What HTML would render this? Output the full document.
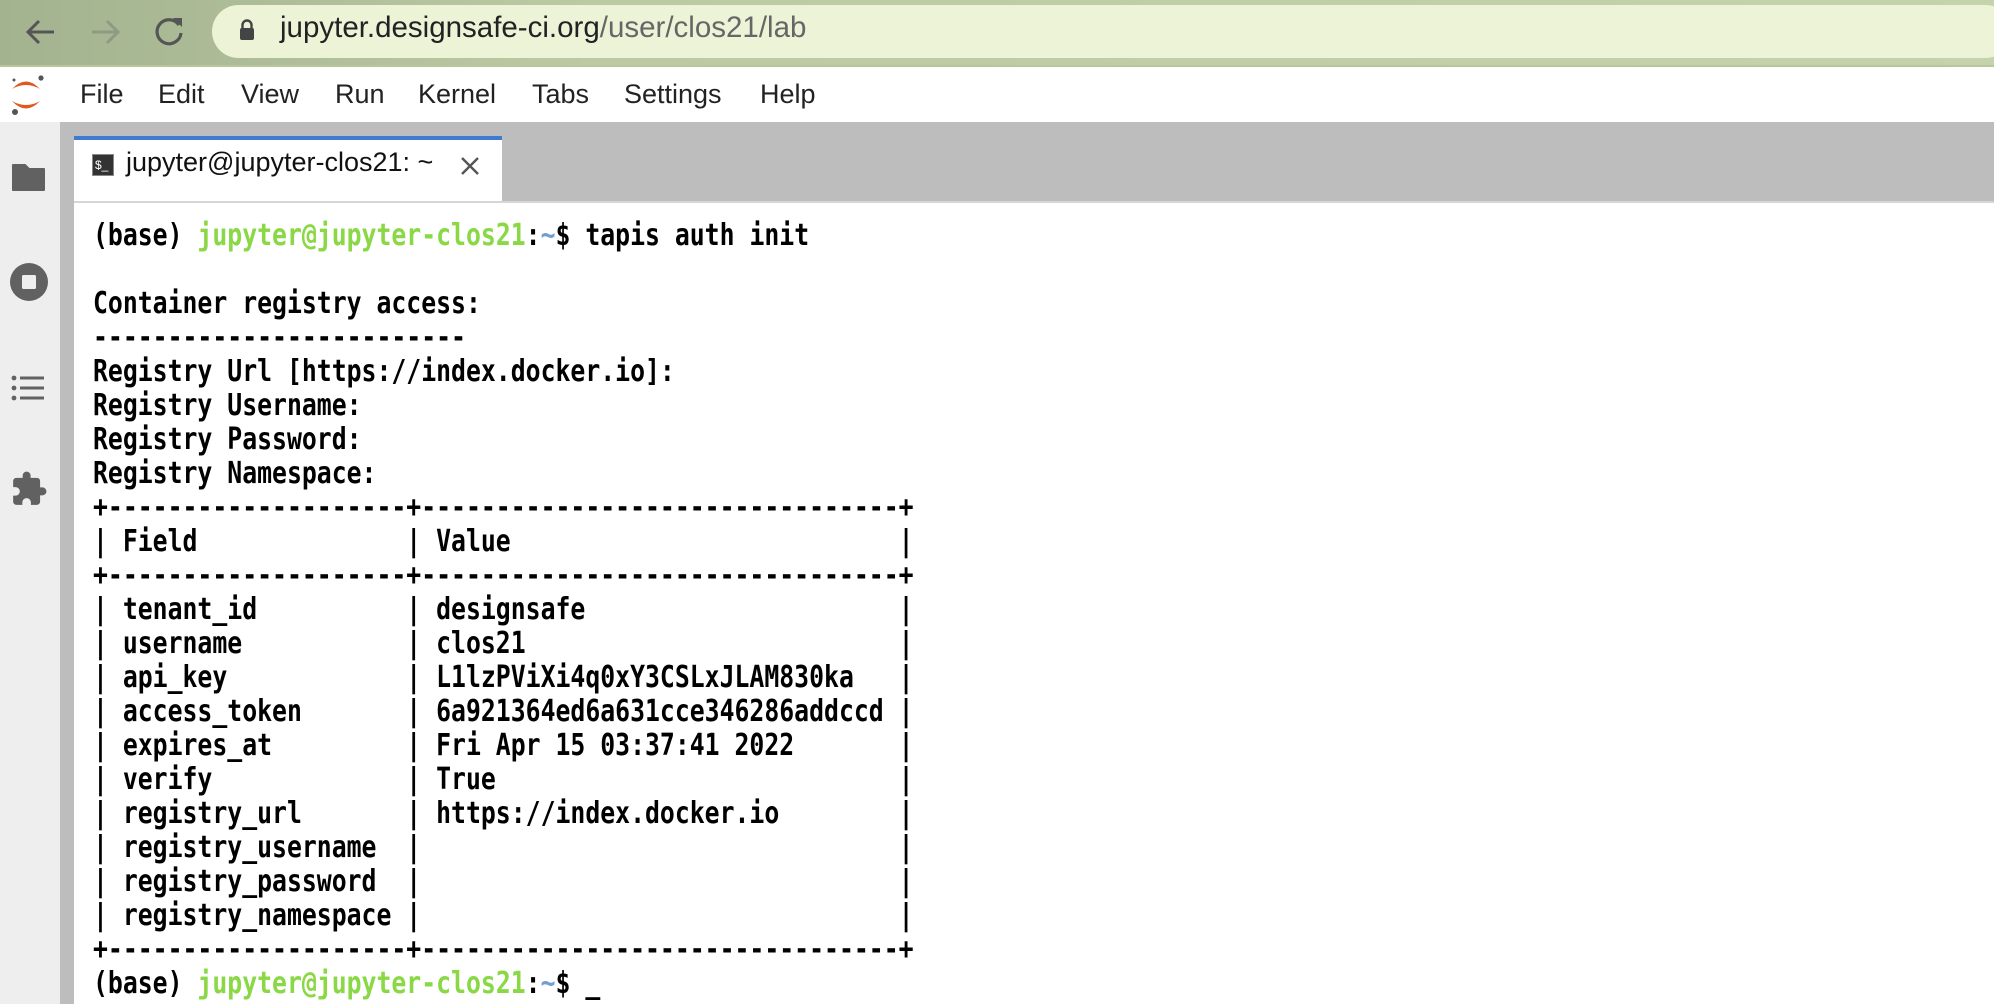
<!DOCTYPE html>
<html><head><meta charset="utf-8"><style>
*{margin:0;padding:0;box-sizing:border-box}
body{width:1994px;height:1004px;overflow:hidden;background:#fff;font-family:"Liberation Sans",sans-serif;position:relative}
#top{position:absolute;left:0;top:0;width:1994px;height:67px;background:linear-gradient(90deg,#a3b38f,#bccaa4 30%,#c5d3ad);border-bottom:2px solid #b6c79a}
#addr{position:absolute;left:212px;top:5px;width:1800px;height:53px;border-radius:27px;background:#ecf3d6}
#url{position:absolute;left:280px;top:11px;font-size:29.5px;color:#222}
#url span{color:#666}
#menu{position:absolute;left:0;top:67px;width:1994px;height:55px;background:#fff}
#menu .m{position:absolute;top:12px;font-size:27px;color:#222}
#side{position:absolute;left:0;top:122px;width:60px;height:882px;background:#eeeeee}
#gray{position:absolute;left:60px;top:122px;width:1934px;height:79px;background:#bdbdbd}
#gstrip{position:absolute;left:60px;top:122px;width:14px;height:882px;background:#bdbdbd}
#tab{position:absolute;left:74px;top:136px;width:428px;height:66px;background:#fff;border-top:4px solid #3f7bd0}
#term{position:absolute;left:74px;top:201px;width:1920px;height:803px;background:#fff;border-top:2px solid #d6d6d6}
pre{position:absolute;left:93px;top:219px;font-family:"DejaVu Sans Mono","Liberation Mono",monospace;font-weight:bold;font-size:30px;line-height:34px;color:#000;transform:scaleX(0.826);transform-origin:0 0}
.g{color:#8ad845}.b{color:#729fcf}
</style></head><body>
<div id="top">
<svg style="position:absolute;left:24px;top:16px" width="34" height="32" viewBox="0 0 34 32"><path d="M30 16H5M15 5L4 16l11 11" fill="none" stroke="#555" stroke-width="3"/></svg>
<svg style="position:absolute;left:88px;top:16px" width="34" height="32" viewBox="0 0 34 32"><path d="M4 16h25M19 5l11 11-11 11" fill="none" stroke="#8f9a82" stroke-width="3"/></svg>
<svg style="position:absolute;left:152px;top:14px" width="34" height="34" viewBox="0 0 34 34"><path d="M27 11A12 12 0 1 0 29 19" fill="none" stroke="#555" stroke-width="3.2"/><path d="M21 4h9v9z" fill="#555"/></svg>
<div id="addr"></div>
<svg style="position:absolute;left:239px;top:18px" width="16" height="24" viewBox="0 0 16 24"><path d="M3.5 11V7a4.5 4.5 0 0 1 9 0v4" fill="none" stroke="#444" stroke-width="2.4"/><rect x="1" y="10" width="14" height="12" rx="2" fill="#444"/></svg>
<div id="url">jupyter.designsafe-ci.org<span>/user/clos21/lab</span></div>
</div>
<div id="menu">
<svg style="position:absolute;left:6px;top:5px" width="40" height="46" viewBox="0 0 40 46"><path d="M6 17 Q20 2 34 17 Q20 9 6 17Z" fill="#e05a1f"/><path d="M6 29 Q20 44 34 29 Q20 37 6 29Z" fill="#e05a1f"/><circle cx="35" cy="6" r="2.6" fill="#555"/><circle cx="9" cy="40" r="3" fill="#555"/><circle cx="8" cy="8" r="1.5" fill="#555"/></svg>
<div class="m" style="left:80px">File</div><div class="m" style="left:158px">Edit</div><div class="m" style="left:241px">View</div><div class="m" style="left:335px">Run</div><div class="m" style="left:418px">Kernel</div><div class="m" style="left:532px">Tabs</div><div class="m" style="left:624px">Settings</div><div class="m" style="left:760px">Help</div>
</div>
<div id="side">
<svg style="position:absolute;left:11px;top:40px" width="36" height="30" viewBox="0 0 36 30"><path d="M2 3h12l4 4h15v21H2z" fill="#616161" stroke="#616161" stroke-width="2" stroke-linejoin="round"/></svg>
<svg style="position:absolute;left:9px;top:140px" width="40" height="40" viewBox="0 0 40 40"><circle cx="20" cy="20" r="19" fill="#616161"/><rect x="13" y="13" width="14" height="14" rx="1.5" fill="#eee"/></svg>
<svg style="position:absolute;left:11px;top:252px" width="34" height="28" viewBox="0 0 34 28"><g fill="#616161"><circle cx="3" cy="4" r="2.4"/><circle cx="3" cy="14" r="2.4"/><circle cx="3" cy="24" r="2.4"/><rect x="9" y="2.5" width="24" height="3"/><rect x="9" y="12.5" width="24" height="3"/><rect x="9" y="22.5" width="24" height="3"/></g></svg>
<svg style="position:absolute;left:10px;top:348px" width="38" height="38" viewBox="0 0 24 24"><path fill="#616161" d="M20.5 11H19V7c0-1.1-.9-2-2-2h-4V3.5a2.5 2.5 0 0 0-5 0V5H4c-1.1 0-2 .9-2 2v3.8h1.5c1.5 0 2.7 1.2 2.7 2.7S5 16.2 3.5 16.2H2V20c0 1.1.9 2 2 2h3.8v-1.5c0-1.500 1.2-2.7 2.7-2.7s2.7 1.2 2.7 2.7V22H17c1.1 0 2-.9 2-2v-4h1.5a2.5 2.5 0 0 0 0-5z"/></svg>
</div>
<div id="gstrip"></div>
<div id="gray"></div>
<div id="tab">
<div style="position:absolute;left:18px;top:14px;width:22px;height:22px;background:#333;border:1px solid #888;color:#fff;font-size:12px;line-height:20px;padding-left:2px">$_</div>
<div style="position:absolute;left:52px;top:7px;font-size:27px;color:#111">jupyter@jupyter-clos21: ~</div>
<svg style="position:absolute;left:386px;top:16px" width="20" height="20" viewBox="0 0 20 20"><path d="M2 2l16 16M18 2L2 18" stroke="#555" stroke-width="2.4"/></svg>
</div>
<div id="term"></div>
<pre>(base) <span class="g">jupyter@jupyter-clos21</span>:<span class="b">~</span>$ tapis auth init

Container registry access:
-------------------------
Registry Url [https://index.docker.io]:
Registry Username:
Registry Password:
Registry Namespace:
+--------------------+--------------------------------+
| Field              | Value                          |
+--------------------+--------------------------------+
| tenant_id          | designsafe                     |
| username           | clos21                         |
| api_key            | L1lzPViXi4q0xY3CSLxJLAM830ka   |
| access_token       | 6a921364ed6a631cce346286addccd |
| expires_at         | Fri Apr 15 03:37:41 2022       |
| verify             | True                           |
| registry_url       | https://index.docker.io        |
| registry_username  |                                |
| registry_password  |                                |
| registry_namespace |                                |
+--------------------+--------------------------------+
(base) <span class="g">jupyter@jupyter-clos21</span>:<span class="b">~</span>$ _</pre>
</body></html>
